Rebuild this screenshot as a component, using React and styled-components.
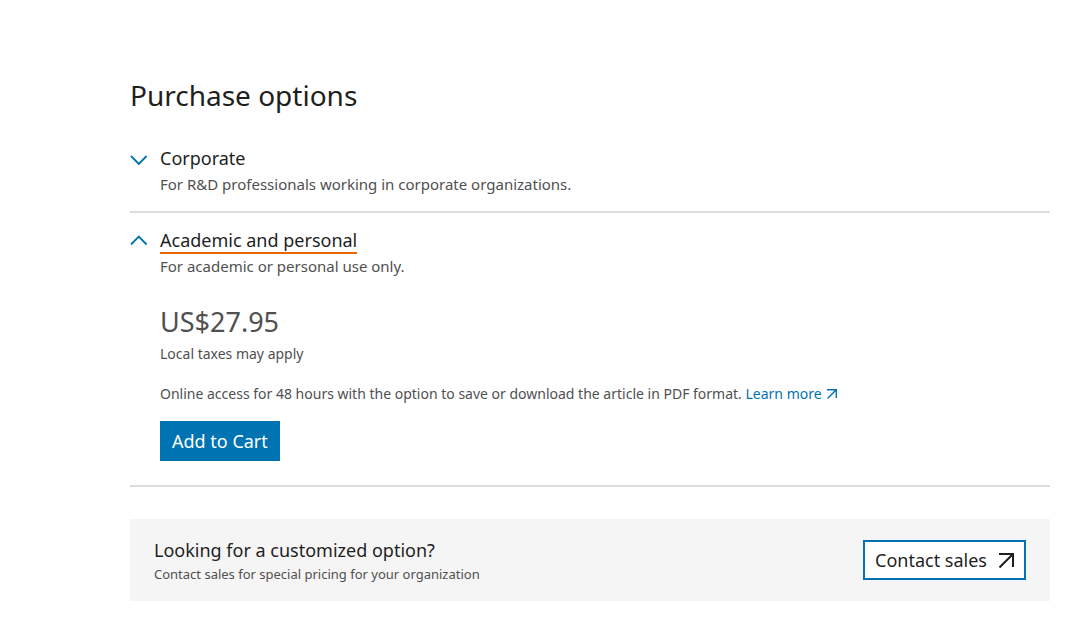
import React, { useState } from "react";
import styled, { createGlobalStyle } from "styled-components";

const GlobalStyle = createGlobalStyle`
  *, *::before, *::after { box-sizing: border-box; }
  body {
    margin: 0;
    background: #fff;
    color: #505050;
    font-family: "Noto Sans", "Open Sans", sans-serif;
    font-size: 14px;
    line-height: 24px;
  }
  h2, h3, p { margin: 0; font-weight: 400; }
`;

const Page = styled.main`
  padding: 76px 32px 40px 130px;
`;

const Heading = styled.h2`
  margin-bottom: 17px;
  color: #1f1f1f;
  font-size: 28px;
  line-height: 38px;
`;

const Option = styled.section`
  padding-top: 16px;
  border-bottom: 2px solid #dcdcdc;
`;

const OptionToggle = styled.button`
  display: flex;
  align-items: flex-start;
  gap: 12px;
  width: 100%;
  padding: 0 0 15px;
  border: 0;
  background: none;
  color: inherit;
  font: inherit;
  text-align: left;
  cursor: pointer;
`;

const Chevron = styled.svg`
  flex: none;
  width: 18px;
  height: 24px;
  fill: none;
  stroke: #0073b2;
  stroke-width: 1.8;
`;

const OptionText = styled.span`
  display: flex;
  flex-direction: column;
  align-items: flex-start;
`;

const OptionTitle = styled.span`
  border-bottom: 2px solid ${({ $open }) => ($open ? "#eb6500" : "transparent")};
  color: #1f1f1f;
  font-size: 18px;
  line-height: 23px;
`;

const OptionNote = styled.span`
  font-size: 15px;
`;

const Panel = styled.div`
  padding: 9px 0 24px 30px;
`;

const Price = styled.p`
  font-size: 27px;
  line-height: 40px;
`;

const Description = styled.p`
  margin: 16px 0 15px;
`;

const LearnMore = styled.a`
  display: inline-flex;
  align-items: center;
  gap: 5px;
  color: #0073b2;
  text-decoration: none;
`;

const Arrow = styled.svg`
  flex: none;
  fill: none;
  stroke: currentColor;
`;

const CartButton = styled.button`
  display: block;
  height: 40px;
  padding: 0 12px;
  border: 0;
  background: #0073b2;
  color: #fff;
  font: inherit;
  font-size: 18px;
  cursor: pointer;
`;

const CustomOption = styled.aside`
  display: flex;
  align-items: center;
  justify-content: space-between;
  gap: 24px;
  margin-top: 32px;
  padding: 17px 24px;
  background: #f5f5f5;
`;

const CustomText = styled.div`
  display: flex;
  flex-direction: column;
  gap: 2px;
  padding-top: 2px;
`;

const CustomTitle = styled.h3`
  color: #1f1f1f;
  font-size: 18px;
  line-height: 24px;
`;

const CustomNote = styled.p`
  font-size: 13px;
  line-height: 20px;
`;

const SalesLink = styled.a`
  display: flex;
  flex: none;
  align-items: center;
  gap: 12px;
  height: 40px;
  padding: 0 10px;
  border: 2px solid #0073b2;
  background: #fff;
  color: #1f1f1f;
  font-size: 18px;
  text-decoration: none;
`;

function NorthEastArrow({ size, weight }) {
  const edge = size - weight / 2;
  return (
    <Arrow width={size} height={size} viewBox={`0 0 ${size} ${size}`} strokeWidth={weight} aria-hidden="true">
      <path d={`M0 ${weight / 2}H${edge}V${size - 1}M${edge} ${weight / 2}L0.5 ${size - 0.5}`} />
    </Arrow>
  );
}

function PurchaseOption({ id, title, note, defaultOpen, children }) {
  const [open, setOpen] = useState(Boolean(defaultOpen));
  return (
    <Option>
      <OptionToggle type="button" aria-expanded={open} aria-controls={id} onClick={() => setOpen(!open)}>
        <Chevron viewBox="0 0 18 24" aria-hidden="true">
          <path d={open ? "M1 15.5L8.8 7.5L16.6 15.5" : "M1 9L8.8 17L16.6 9"} />
        </Chevron>
        <OptionText>
          <OptionTitle $open={open}>{title}</OptionTitle>
          <OptionNote>{note}</OptionNote>
        </OptionText>
      </OptionToggle>
      <div id={id} hidden={!open}>{children}</div>
    </Option>
  );
}

export default function App() {
  return (
    <>
      <GlobalStyle />
      <Page>
        <Heading>Purchase options</Heading>
        <PurchaseOption
          id="corporate"
          title="Corporate"
          note="For R&D professionals working in corporate organizations."
        />
        <PurchaseOption
          id="academic"
          title="Academic and personal"
          note="For academic or personal use only."
          defaultOpen
        >
          <Panel>
            <Price>US$27.95</Price>
            <p>Local taxes may apply</p>
            <Description>
              Online access for 48 hours with the option to save or download the article in PDF format.{" "}
              <LearnMore href="#learn-more">
                Learn more
                <NorthEastArrow size={10} weight={1.4} />
              </LearnMore>
            </Description>
            <CartButton type="button">Add to Cart</CartButton>
          </Panel>
        </PurchaseOption>
        <CustomOption>
          <CustomText>
            <CustomTitle>Looking for a customized option?</CustomTitle>
            <CustomNote>Contact sales for special pricing for your organization</CustomNote>
          </CustomText>
          <SalesLink href="#contact-sales">
            Contact sales
            <NorthEastArrow size={15} weight={2} />
          </SalesLink>
        </CustomOption>
      </Page>
    </>
  );
}
